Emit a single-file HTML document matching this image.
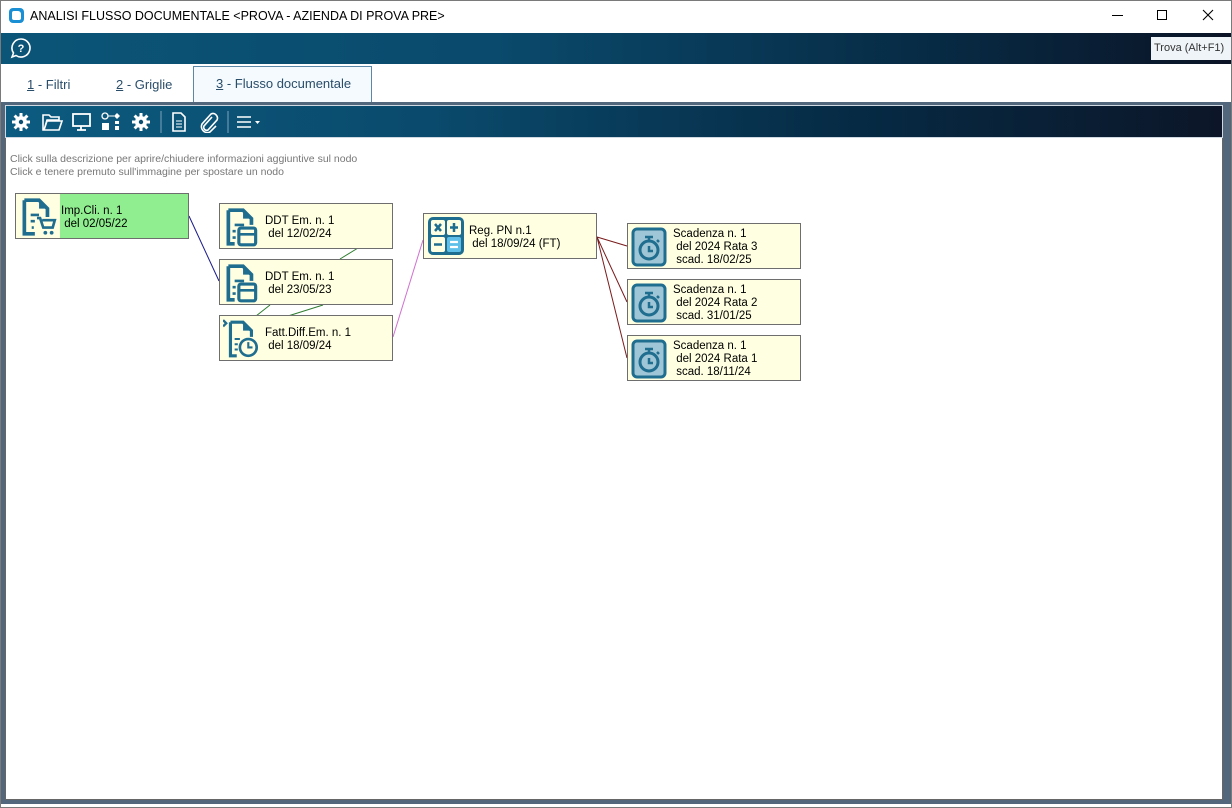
<!DOCTYPE html>
<html><head><meta charset="utf-8"><style>
*{margin:0;padding:0;box-sizing:border-box}
body{width:1232px;height:808px;position:relative;background:#fff;font-family:"Liberation Sans",sans-serif;overflow:hidden}
.a{position:absolute}
.title{left:0;top:0;width:1232px;height:32px;background:#fff;font-family:"Liberation Sans",sans-serif;font-size:12.5px;color:#000}
.bar{left:1px;top:33px;width:1230px;height:31px;background:linear-gradient(90deg,#0b5578 0%,#0a4a6c 40%,#072b45 75%,#0b1426 100%)}
.tab{font-family:"Liberation Sans",sans-serif;font-size:13px;color:#2a4d6a}
.frame{left:1px;top:102px;width:1230px;height:702px;background:#52677c}
.tb{left:5px;top:105px;width:1218px;height:33px;background:linear-gradient(90deg,#0c5b80 0%,#0a4a6c 35%,#062a44 70%,#0c1628 100%);border:1px solid #cfd8e0}
.canvas{left:5px;top:138px;width:1218px;height:662px;background:#fff;border:1px solid #666;border-top:none}
.node{position:absolute;background:#ffffe1;border:1px solid #6e6e6e;font-family:"Liberation Sans",sans-serif;font-size:11.5px;line-height:13px;color:#000}
.node .t{position:absolute;left:45px;top:11px;white-space:pre}
.node svg{position:absolute;left:3px;top:2px}
.hint{font-family:"Liberation Sans",sans-serif;font-size:10.5px;color:#777;line-height:13px}
</style></head><body>
<div class="a" style="left:0;top:0;width:1232px;height:808px;border:1px solid #7a7a7a;z-index:5;pointer-events:none"></div>
<div class="a title">
<div class="a" style="left:9px;top:8px;width:15px;height:15px;background:#1a8fd3;border-radius:4px"><div style="margin:3px;width:9px;height:9px;background:#fff;border-radius:2px 3px 2px 2px"></div></div>
<div class="a" style="left:30px;top:9px">ANALISI FLUSSO DOCUMENTALE &lt;PROVA - AZIENDA DI PROVA PRE&gt;</div>
<div class="a" style="left:1112px;top:15px;width:11px;height:1px;background:#000"></div>
<div class="a" style="left:1157px;top:10px;width:10px;height:10px;border:1px solid #000"></div>
<svg class="a" style="left:1202px;top:9px" width="12" height="12"><path d="M1 1L11 11M11 1L1 11" stroke="#000" stroke-width="1.1"/></svg>
</div>
<div class="a bar">
<svg class="a" style="left:9px;top:4px" width="22" height="22"><path d="M11 2a9 9 0 1 1-5 16.5L2 20l1.5-4A9 9 0 0 1 11 2z" fill="none" stroke="#fff" stroke-width="1.6"/><text x="11" y="15" text-anchor="middle" font-size="11" font-family="Liberation Sans" font-weight="bold" fill="#fff">?</text></svg>
<div class="a" style="right:0;top:4px;width:80px;height:23px;background:#eef4f8;font-family:'Liberation Sans',sans-serif;font-size:11px;color:#333;padding:5px 0 0 3px">Trova (Alt+F1)</div>
</div>
<div class="a tab" style="left:27px;top:77px"><u>1</u> - Filtri</div>
<div class="a tab" style="left:116px;top:77px"><u>2</u> - Griglie</div>
<div class="a" style="left:193px;top:66px;width:179px;height:37px;background:#f4fafd;border:1px solid #5c87a6;border-bottom:none"></div>
<div class="a tab" style="left:216px;top:76px"><u>3</u> - Flusso documentale</div>
<div class="a frame"></div>
<div class="a" style="left:1px;top:804px;width:1230px;height:3px;background:#fff"></div>
<div class="a tb">
<svg class="a" style="left:5px;top:5px" width="260" height="22" fill="#fff">
<g transform="translate(10,11)"><circle r="6"/><g stroke="#fff" stroke-width="3"><path d="M0-9V9M-9 0H9M-6.4-6.4L6.4 6.4M6.4-6.4L-6.4 6.4"/></g><circle r="2.2" fill="#0a4f72"/></g>
<path d="M32 4h6l2 2h8v3H36l-3 10h-1zM36 10h15l-3 9H33z" fill="none" stroke="#fff" stroke-width="1.6"/>
<rect x="62" y="3" width="17" height="12" fill="none" stroke="#fff" stroke-width="1.8"/><path d="M66 19h9M70 15v4" stroke="#fff" stroke-width="1.8"/>
<circle cx="94" cy="5" r="3" fill="none" stroke="#fff" stroke-width="1.3"/><rect x="91" y="12" width="7" height="7"/><path d="M97 5h6" stroke="#fff"/><path d="M106 2l3 3-3 3-3-3z"/><rect x="104" y="10" width="4" height="3"/><rect x="104" y="15" width="4" height="4"/>
<g transform="translate(130,11)"><circle r="6"/><g stroke="#fff" stroke-width="3"><path d="M0-9V9M-9 0H9M-6.4-6.4L6.4 6.4M6.4-6.4L-6.4 6.4"/></g><circle r="2.2" fill="#0a4f72"/></g>
<path d="M150 0v22" stroke="#7fa2bb"/>
<path d="M162 2h8l4 4v14h-12z" fill="none" stroke="#fff" stroke-width="1.6"/><path d="M165 10h6M165 13h6M165 16h6" stroke="#fff"/>
<path d="M201 6l-8 9a3 3 0 0 0 4 4l9-10a4.5 4.5 0 0 0-6-6l-9 10a6 6 0 0 0 8 8l6-6" fill="none" stroke="#fff" stroke-width="1.6"/>
<path d="M217 0v22" stroke="#7fa2bb"/>
<path d="M226 6h14M226 11h14M226 16h14" stroke="#fff" stroke-width="1.6"/><path d="M244 10h5l-2.5 3z"/>
</svg>
</div>
<div class="a canvas">
<div class="a hint" style="left:4px;top:15px">Click sulla descrizione per aprire/chiudere informazioni aggiuntive sul nodo<br>Click e tenere premuto sull'immagine per spostare un nodo</div>
<svg class="a" style="left:-6px;top:-138px" width="1232" height="808">
<path d="M189 216L219 281" stroke="#1a1a8c"/>
<path d="M256 316L270 305M288 316L323 305M340 259L358 248" stroke="#2e7d2e"/>
<path d="M393 337L423 240" stroke="#d070d0"/>
<path d="M597 237L627 246M597 237L627 302M597 237L627 358" stroke="#7a1a1a"/>
</svg>
<div class="node" style="left:9px;top:55px;width:174px;height:46px;background:#90ee90">
<div class="a" style="left:0;top:0;width:44px;height:44px;background:#ffffe1"></div>
<svg width="38" height="42" viewBox="0 0 36 40"><path d="M5 4h14l8 8v8M5 4v32h10" fill="none" stroke="#1f6d8f" stroke-width="3.5"/><path d="M19 4v8h8" fill="#1f6d8f"/><path d="M11 18h8M11 24h4M12 30h2M17 21h3l3 9h9l2-7H22" fill="none" stroke="#1f6d8f" stroke-width="2.5"/><circle cx="25" cy="35" r="1.8" fill="#1f6d8f"/><circle cx="31" cy="35" r="1.8" fill="#1f6d8f"/></svg>
<div class="t" style="top:11px">Imp.Cli. n. 1
 del 02/05/22</div></div>
<div class="node" style="left:213px;top:65px;width:174px;height:46px">
<svg width="38" height="42" viewBox="0 0 36 40"><path d="M5 4h14l8 8v6M5 4v32h6" fill="none" stroke="#1f6d8f" stroke-width="3.5"/><path d="M19 4v8h8" fill="#1f6d8f"/><path d="M11 18h9M9 24h3M9 30h3" stroke="#1f6d8f" stroke-width="2.5"/><rect x="15" y="21" width="16" height="16" rx="2" fill="none" stroke="#1f6d8f" stroke-width="3"/><path d="M15 27h16" stroke="#1f6d8f" stroke-width="2.5"/></svg>
<div class="t">DDT Em. n. 1
 del 12/02/24</div></div>
<div class="node" style="left:213px;top:121px;width:174px;height:46px">
<svg width="38" height="42" viewBox="0 0 36 40"><path d="M5 4h14l8 8v6M5 4v32h6" fill="none" stroke="#1f6d8f" stroke-width="3.5"/><path d="M19 4v8h8" fill="#1f6d8f"/><path d="M11 18h9M9 24h3M9 30h3" stroke="#1f6d8f" stroke-width="2.5"/><rect x="15" y="21" width="16" height="16" rx="2" fill="none" stroke="#1f6d8f" stroke-width="3"/><path d="M15 27h16" stroke="#1f6d8f" stroke-width="2.5"/></svg>
<div class="t">DDT Em. n. 1
 del 23/05/23</div></div>
<div class="node" style="left:213px;top:177px;width:174px;height:46px">
<svg width="38" height="42" viewBox="0 0 36 40"><path d="M0 2l3 3-3 3" fill="none" stroke="#1f6d8f" stroke-width="2.2"/><path d="M7 4h12l8 8v6M7 4v32h6" fill="none" stroke="#1f6d8f" stroke-width="3"/><path d="M19 4v8h8" fill="#1f6d8f"/><path d="M11 20h5M11 25h3M11 30h3" stroke="#1f6d8f" stroke-width="2"/><circle cx="24" cy="28" r="8" fill="none" stroke="#1f6d8f" stroke-width="2.5"/><path d="M24 23v5h4" fill="none" stroke="#1f6d8f" stroke-width="2"/></svg>
<div class="t">Fatt.Diff.Em. n. 1
 del 18/09/24</div></div>
<div class="node" style="left:417px;top:75px;width:174px;height:46px">
<svg width="38" height="40" viewBox="0 0 38 40"><rect x="1" y="1" width="36" height="38" rx="5" fill="#1f6d8f"/><rect x="4" y="4" width="14" height="15" rx="2" fill="#ffffe1"/><rect x="20" y="4" width="14" height="15" rx="2" fill="#ffffe1"/><rect x="4" y="21" width="14" height="15" rx="2" fill="#ffffe1"/><rect x="20" y="21" width="14" height="15" rx="2" fill="#5ec0e8"/><path d="M8 8l6 7M14 8l-6 7M27 7v9M23 11.5h8M7 28.5h8" stroke="#1f6d8f" stroke-width="2.5"/><path d="M23 26h8M23 31h8" stroke="#fff" stroke-width="2.2"/></svg>
<div class="t">Reg. PN n.1
 del 18/09/24 (FT)</div></div>
<div class="node" style="left:621px;top:85px;width:174px;height:46px"><svg width="36" height="42" viewBox="0 0 36 40"><rect x="2" y="2" width="32" height="36" rx="4" fill="#9fc6d6" stroke="#1f6d8f" stroke-width="3"/><circle cx="18" cy="23" r="9" fill="none" stroke="#1f6d8f" stroke-width="3"/><path d="M14 10h8M18 10v4M18 19v5h4M26 13l2 2" stroke="#1f6d8f" stroke-width="2.5" fill="none"/></svg><div class="t" style="top:4px">Scadenza n. 1
 del 2024 Rata 3
 scad. 18/02/25</div></div>
<div class="node" style="left:621px;top:141px;width:174px;height:46px"><svg width="36" height="42" viewBox="0 0 36 40"><rect x="2" y="2" width="32" height="36" rx="4" fill="#9fc6d6" stroke="#1f6d8f" stroke-width="3"/><circle cx="18" cy="23" r="9" fill="none" stroke="#1f6d8f" stroke-width="3"/><path d="M14 10h8M18 10v4M18 19v5h4M26 13l2 2" stroke="#1f6d8f" stroke-width="2.5" fill="none"/></svg><div class="t" style="top:4px">Scadenza n. 1
 del 2024 Rata 2
 scad. 31/01/25</div></div>
<div class="node" style="left:621px;top:197px;width:174px;height:46px"><svg width="36" height="42" viewBox="0 0 36 40"><rect x="2" y="2" width="32" height="36" rx="4" fill="#9fc6d6" stroke="#1f6d8f" stroke-width="3"/><circle cx="18" cy="23" r="9" fill="none" stroke="#1f6d8f" stroke-width="3"/><path d="M14 10h8M18 10v4M18 19v5h4M26 13l2 2" stroke="#1f6d8f" stroke-width="2.5" fill="none"/></svg><div class="t" style="top:4px">Scadenza n. 1
 del 2024 Rata 1
 scad. 18/11/24</div></div>
</div>
</body></html>
